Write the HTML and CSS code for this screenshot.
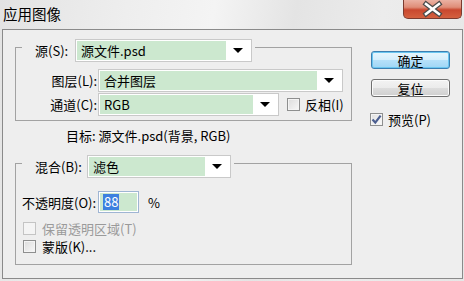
FILE: index.html
```html
<!DOCTYPE html>
<html lang="zh-CN">
<head>
<meta charset="utf-8">
<title>应用图像</title>
<link rel="stylesheet" href="styles.css">
</head>
<body>
<div class="window">
  <div class="titlebar">
    <span class="title">应用图像</span>
    <span class="close" aria-label="关闭">
      <svg width="57" height="18" viewBox="0 0 57 18">
        <path d="M22 4 L35 14 M35 4 L22 14" stroke="#4a4a4a" stroke-width="5" stroke-linecap="square" fill="none"/>
        <path d="M22 4 L35 14 M35 4 L22 14" stroke="#ffffff" stroke-width="2.6" stroke-linecap="square" fill="none"/>
      </svg>
    </span>
  </div>
  <div class="frame">
    <div class="main">
      <fieldset class="group group-source">
        <legend class="legend">
          <span class="legend-row">
            <span class="lbl lbl-src">源(S):</span>
            <span class="select w-src"><span class="val">源文件.psd</span><span class="arrow"></span></span>
          </span>
        </legend>
        <div class="row row-first">
          <span class="lbl lbl-r">图层(L):</span>
          <span class="select w-layer"><span class="val">合并图层</span><span class="arrow"></span></span>
        </div>
        <div class="row row-second">
          <span class="lbl lbl-r">通道(C):</span>
          <span class="select w-chan"><span class="val">RGB</span><span class="arrow"></span></span>
          <span class="check check-invert"><span class="box"></span><span>反相(I)</span></span>
        </div>
      </fieldset>
      <div class="target">目标: 源文件.psd(背景, RGB)</div>
      <fieldset class="group group-blend">
        <legend class="legend">
          <span class="legend-row">
            <span class="lbl lbl-blend">混合(B):</span>
            <span class="select w-blend"><span class="val">滤色</span><span class="arrow"></span></span>
          </span>
        </legend>
        <div class="row opacity">
          <span class="lbl lbl-r">不透明度(O):</span>
          <span class="input"><span class="inner"><span class="selected">88</span></span></span>
          <span class="pct">%</span>
        </div>
        <span class="check check-opt disabled"><span class="box"></span><span>保留透明区域(T)</span></span>
        <span class="check check-opt"><span class="box"></span><span>蒙版(K)...</span></span>
      </fieldset>
    </div>
    <div class="side">
      <button class="btn btn-default">确定</button>
      <button class="btn btn-reset">复位</button>
      <span class="check check-preview"><span class="box checked">
        <svg width="11" height="11" viewBox="0 0 11 11"><path d="M1.5 5.5 L4.3 8.6 L9.6 1.6" stroke="#4c5f90" stroke-width="2.2" fill="none"/></svg>
      </span><span>预览(P)</span></span>
    </div>
  </div>
</div>
</body>
</html>
```

FILE: styles.css
```css
* { box-sizing: border-box; }
html, body { margin: 0; padding: 0; }
body {
  width: 464px;
  height: 281px;
  overflow: hidden;
  font-family: "Noto Sans CJK SC", "Noto Sans", sans-serif;
  font-size: 13px;
  color: #000;
}
.window {
  width: 464px;
  height: 281px;
  display: flex;
  flex-direction: column;
  background: linear-gradient(100deg, #e3e3e3 0%, #eeeeee 25%, #f4f4f4 42%, #e4e4e4 58%, #ececec 75%, #e6e6e6 100%);
}
.titlebar {
  height: 29px;
  display: flex;
  justify-content: space-between;
  align-items: flex-start;
}
.title {
  font-size: 14.5px;
  line-height: 28px;
  padding-left: 3px;
}
.close {
  width: 59px;
  height: 19px;
  margin-right: 2px;
  display: flex;
  align-items: center;
  justify-content: center;
  border: 1px solid #7b3b30;
  border-top: none;
  border-radius: 0 0 5px 5px;
  background: linear-gradient(#eab1a3 0%, #df8d78 40%, #c9482f 55%, #d4603f 100%);
}
.close svg { display: block; }
.frame {
  margin: 0 1px 0 2px;
  height: 250px;
  border: 1px solid #8a8a8a;
  background: #eeeeee;
  display: flex;
}
.main {
  width: 349px;
  padding-left: 12px;
  display: flex;
  flex-direction: column;
}
.group {
  width: 337px;
  margin: 0;
  min-width: 0;
  border: 1px solid #a2a2a2;
  padding: 0 0 4px 6px;
}
.group-source { margin-top: 3px; }
.group-blend { margin-top: 5px; padding-bottom: 9px; }
.legend {
  padding: 6px 3px 0 13px;
}
.legend-row {
  display: flex;
  align-items: center;
}
.lbl { line-height: 17px; white-space: nowrap; }
.lbl-src { width: 40px; }
.lbl-blend { width: 52px; }
.lbl-r { width: 76px; text-align: right; padding-right: 1px; }
.opacity .lbl-r { text-align: left; }
.select {
  height: 23px;
  display: flex;
  border: 1px solid #c9c9c9;
  background: #fff;
  padding: 1px;
}
.select .val {
  flex: 1;
  background: #cce8cf;
  line-height: 19px;
  padding-left: 4px;
}
.select .arrow {
  width: 24px;
  display: flex;
  align-items: center;
  justify-content: center;
}
.select .arrow::after {
  content: "";
  border-left: 5px solid transparent;
  border-right: 5px solid transparent;
  border-top: 5px solid #000;
}
.w-src { width: 177px; }
.w-layer { width: 245px; }
.w-chan { width: 181px; }
.w-blend { width: 144px; }
.row {
  display: flex;
  align-items: center;
  height: 23px;
}
.row-first { margin-top: 7px; }
.row-second { margin-top: 1px; }
.target {
  margin: 6px 0 0 51px;
  line-height: 17px;
}
.opacity { margin-top: 13px; height: 22px; }
.input {
  width: 41px;
  height: 22px;
  border: 1px solid #9fb5d3;
  background: #fff;
  padding: 1px;
  display: flex;
}
.input .inner {
  flex: 1;
  background: #cce8cf;
  padding: 1px 0 1px 3px;
  display: flex;
}
.input .selected {
  background: #3d80df;
  color: #fff;
  line-height: 16px;
  padding: 0 1px;
}
.pct { margin-left: 9px; }
.check {
  display: flex;
  align-items: center;
  height: 18px;
  gap: 5px;
  line-height: 17px;
  white-space: nowrap;
}
.box {
  width: 13px;
  height: 13px;
  border: 1px solid #8e8f8f;
  background: linear-gradient(135deg, #dcdcdc, #f8f8f8);
  box-shadow: inset 0 0 0 1px #f4f4f4;
  display: flex;
  align-items: center;
  justify-content: center;
}
.check-invert { margin-left: 8px; }
.check-opt { margin-left: 1px; gap: 6px; }
.check-opt:first-of-type { margin-top: 6px; }
.disabled { color: #9a9a9a; }
.disabled .box {
  border-color: #c4c4c4;
  background: #f4f4f4;
  box-shadow: none;
}
.side {
  padding-top: 21px;
  margin-left: 19px;
  display: flex;
  flex-direction: column;
  align-items: flex-start;
}
.btn {
  width: 79px;
  height: 18px;
  font: inherit;
  line-height: 15px;
  padding: 0;
  color: #000;
  border-radius: 3px;
}
.btn-default {
  border: 1px solid #3c7fb1;
  background: linear-gradient(#e8f6fd 0%, #d4eefc 50%, #b6e1fa 51%, #9fd6f5 100%);
  box-shadow: inset 0 0 0 1px #6ac6f0;
}
.btn-reset {
  margin-top: 10px;
  border: 1px solid #707070;
  background: linear-gradient(#f3f3f3 0%, #ebebeb 50%, #dddddd 51%, #cfcfcf 100%);
  box-shadow: inset 0 0 0 1px #fbfbfb;
}
.check-preview { margin-top: 13px; margin-left: -1px; }
.box.checked { background: linear-gradient(135deg, #e0e0e0, #fbfbfb); }
.box.checked svg { display: block; }
```
